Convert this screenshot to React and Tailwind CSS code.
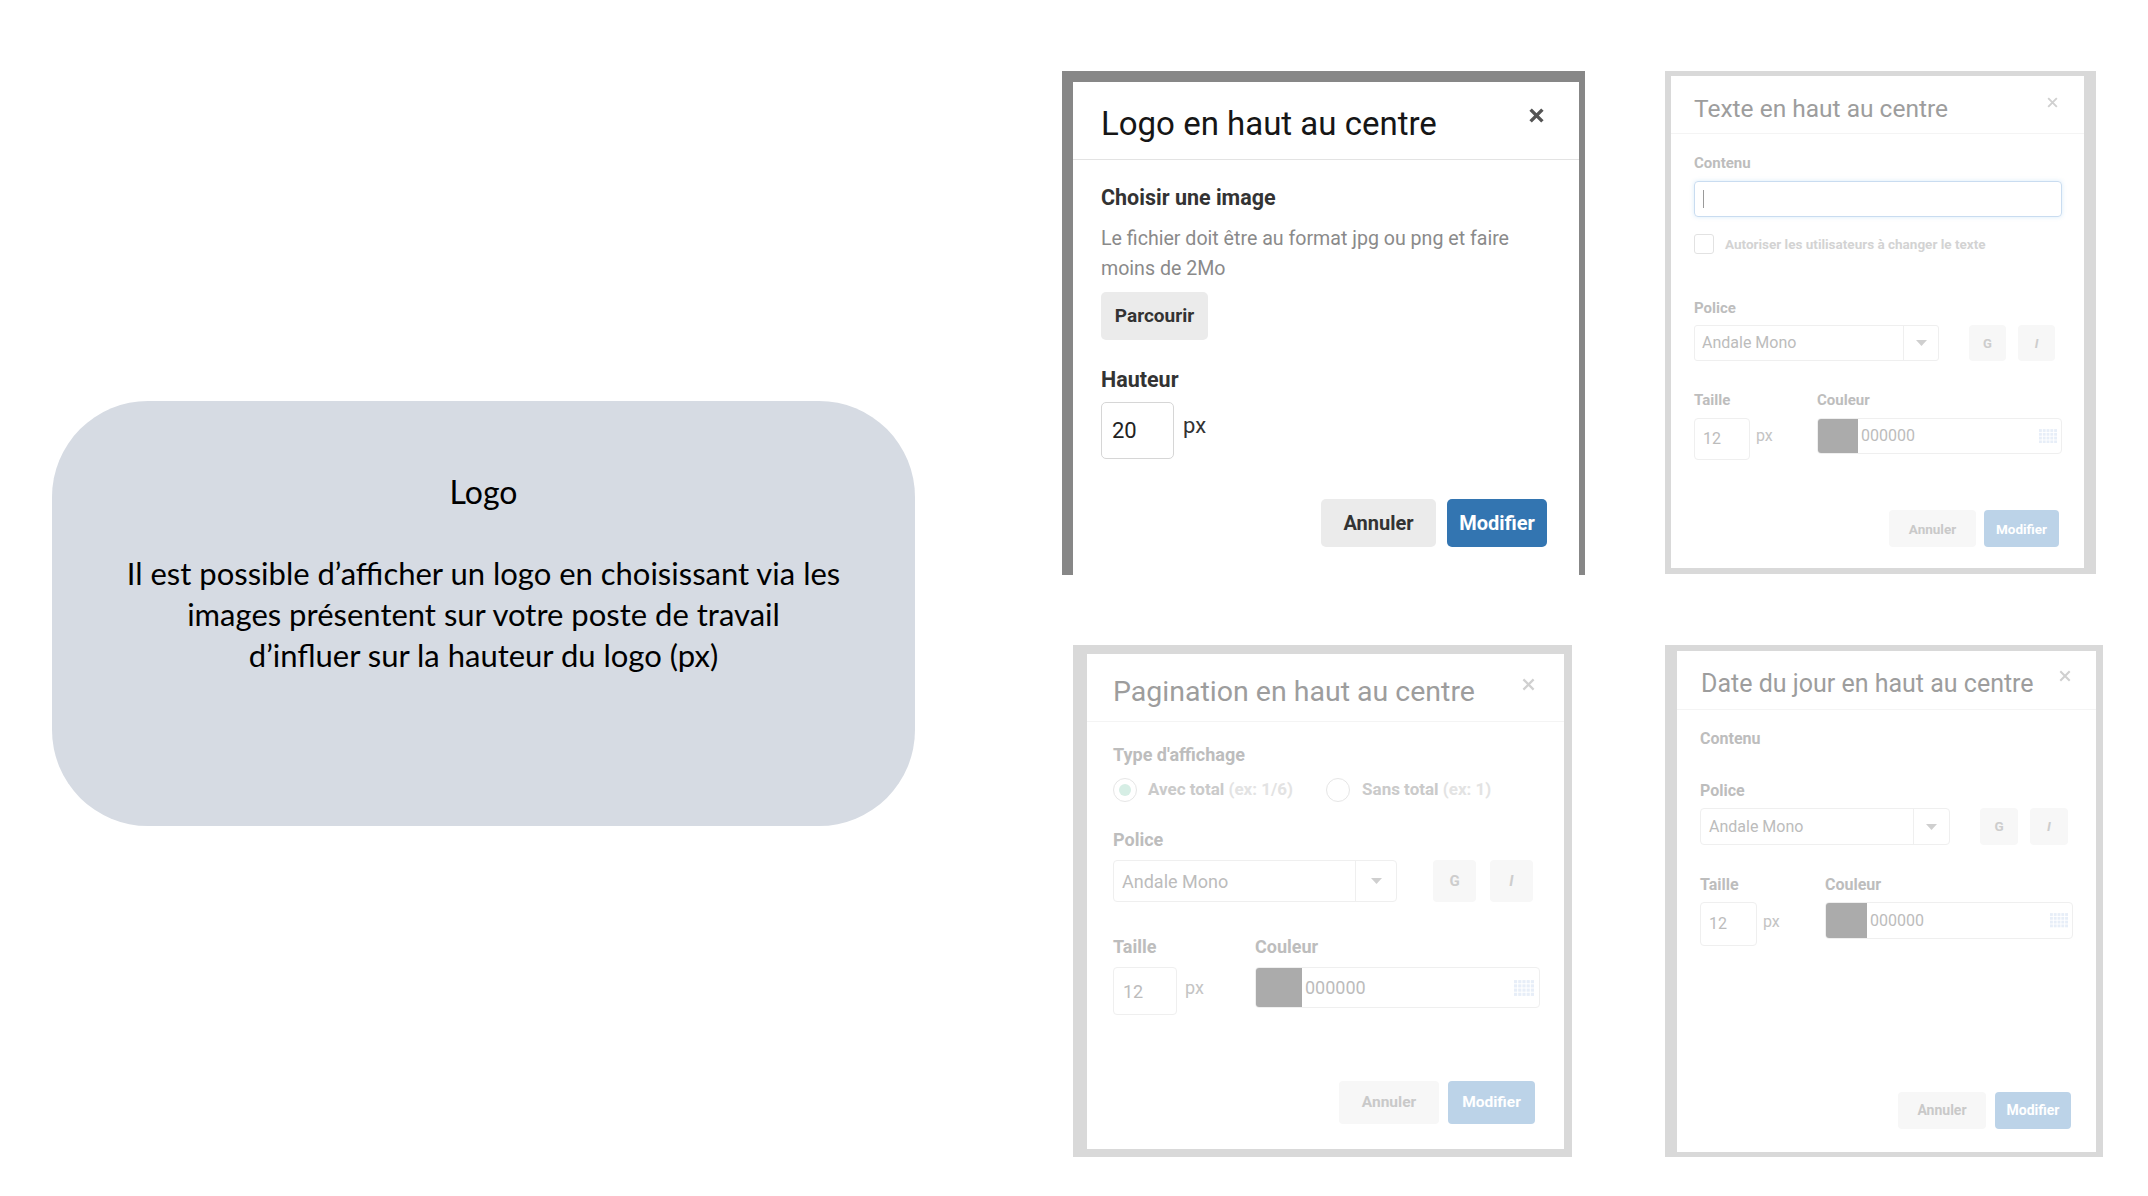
import React from 'react'

// Cross used in the modal headers (square ends, like the bootstrap close glyph)
function CloseX({ size, color, width }) {
  return (
    <svg width={size} height={size} viewBox="0 0 14 14" className="shrink-0">
      <path d="M1.5 1.5 L12.5 12.5 M12.5 1.5 L1.5 12.5" stroke={color} strokeWidth={width} strokeLinecap="butt" />
    </svg>
  )
}

function Caret() {
  return (
    <svg width="11" height="6" viewBox="0 0 11 6">
      <path d="M0 0 H11 L5.5 6 Z" fill="#cfcfcf" />
    </svg>
  )
}

// Little calendar-like grid shown at the end of the colour field
function GridIcon({ size }) {
  const cells = []
  for (let r = 0; r < 4; r++) {
    for (let c = 0; c < 5; c++) {
      cells.push(<rect key={`${r}-${c}`} x={c * 4} y={r * 4} width="3" height="3" fill="#e7eef8" />)
    }
  }
  return (
    <svg width={size} height={size * 0.8} viewBox="0 0 19 15">
      {cells}
    </svg>
  )
}

function LogoModal() {
  return (
    <div className="w-[523px] h-[504px] shrink-0 border-l-[11px] border-t-[11px] border-r-[6px] border-[#878787] bg-white font-['Roboto',sans-serif]">
      <div className="h-[78px] border-b border-[#e3e3e3] flex items-start justify-between pl-[28px] pr-[35px] pt-[22px]">
        <h2 className="text-[33px] leading-[40px] text-[#161616]">Logo en haut au centre</h2>
        <div className="mt-[4px]">
          <CloseX size={15} color="#555" width={3.2} />
        </div>
      </div>
      <div className="pl-[28px] pr-[32px] pt-[25px]">
        <p className="text-[21.5px] leading-[26px] font-bold text-[#333]">Choisir une image</p>
        <p className="mt-[13px] text-[19.6px] leading-[30px] text-[#8a8a8a]">
          Le fichier doit être au format jpg ou png et faire
          <br />
          moins de 2Mo
        </p>
        <button className="mt-[8px] h-[48px] w-[107px] rounded-[5px] bg-[#ebebeb] text-[19px] font-bold text-[#333]">
          Parcourir
        </button>
        <p className="mt-[27px] text-[21.5px] leading-[26px] font-bold text-[#333]">Hauteur</p>
        <div className="mt-[9px] flex items-start">
          <div className="w-[73px] h-[57px] border border-[#d6d6d6] rounded-[5px] flex items-center pl-[10px] text-[22px] text-[#222]">
            20
          </div>
          <span className="ml-[9px] mt-[11px] text-[22px] leading-[26px] text-[#333]">px</span>
        </div>
        <div className="mt-[40px] flex justify-end gap-[11px]">
          <button className="h-[48px] w-[115px] rounded-[5px] bg-[#ebebeb] text-[20px] font-bold text-[#333]">Annuler</button>
          <button className="h-[48px] w-[100px] rounded-[5px] bg-[#3375b1] text-[20px] font-bold text-white">Modifier</button>
        </div>
      </div>
    </div>
  )
}

function TexteModal() {
  return (
    <div className="w-[431px] h-[503px] shrink-0 border-l-[6px] border-t-[5px] border-r-[12px] border-b-[6px] border-[#d9d9d9] bg-white font-['Roboto',sans-serif]">
      <div className="h-[58px] border-b border-[#f4f4f4] flex items-start justify-between pl-[23px] pr-[26px] pt-[18px]">
        <h2 className="text-[24.5px] leading-[30px] text-[#9d9d9d]">Texte en haut au centre</h2>
        <div className="mt-[3px]">
          <CloseX size={11} color="#d0d0d0" width={2.4} />
        </div>
      </div>
      <div className="pl-[23px] pr-[22px] pt-[20px]">
        <p className="text-[15px] leading-[18px] font-bold text-[#bdbdbd]">Contenu</p>
        <div className="mt-[9px] h-[36px] border border-[#c9dcf0] rounded-[4px] shadow-[0_0_4px_rgba(102,175,233,0.25)] flex items-center pl-[8px]">
          <span className="w-px h-[18px] bg-[#9a9a9a]" />
        </div>
        <div className="mt-[17px] flex items-center">
          <span className="w-[20px] h-[20px] border border-[#e2e2e2] rounded-[3px]" />
          <span className="ml-[11px] text-[13.5px] font-bold text-[#d3d3d3]">Autoriser les utilisateurs à changer le texte</span>
        </div>
        <p className="mt-[45px] text-[15px] leading-[18px] font-bold text-[#bdbdbd]">Police</p>
        <div className="mt-[8px] flex">
          <div className="w-[245px] h-[36px] border border-[#efefef] rounded-[3px] flex">
            <span className="flex-1 flex items-center pl-[7px] text-[16px] text-[#bcbcbc]">Andale Mono</span>
            <span className="w-[35px] border-l border-[#efefef] flex items-center justify-center"><Caret /></span>
          </div>
          <span className="ml-[30px] w-[37px] h-[36px] rounded-[4px] bg-[#f7f7f7] flex items-center justify-center text-[13px] font-bold text-[#cdcdcd]">G</span>
          <span className="ml-[12px] w-[37px] h-[36px] rounded-[4px] bg-[#f7f7f7] flex items-center justify-center text-[13px] font-bold italic text-[#cdcdcd]">I</span>
        </div>
        <div className="mt-[30px] flex">
          <div className="w-[123px]">
            <p className="text-[15px] leading-[18px] font-bold text-[#bdbdbd]">Taille</p>
            <div className="mt-[9px] flex items-start">
              <span className="w-[56px] h-[42px] border border-[#efefef] rounded-[4px] flex items-center pl-[8px] text-[16px] text-[#bcbcbc]">12</span>
              <span className="ml-[6px] mt-[8px] text-[16px] leading-[20px] text-[#c4c4c4]">px</span>
            </div>
          </div>
          <div>
            <p className="text-[15px] leading-[18px] font-bold text-[#bdbdbd]">Couleur</p>
            <div className="mt-[9px] w-[245px] h-[36px] border border-[#efefef] rounded-[4px] flex items-center overflow-hidden">
              <span className="w-[40px] h-full bg-[#ababab]" />
              <span className="ml-[3px] flex-1 text-[16px] text-[#bcbcbc]">000000</span>
              <span className="mr-[4px]"><GridIcon size={18} /></span>
            </div>
          </div>
        </div>
        <div className="mt-[50px] flex justify-end gap-[8px] pr-[3px]">
          <button className="h-[37px] w-[87px] rounded-[4px] bg-[#f7f7f7] text-[13.5px] font-bold text-[#c9c9c9]">Annuler</button>
          <button className="h-[37px] w-[75px] rounded-[4px] bg-[#bcd3e8] text-[13.5px] font-bold text-white">Modifier</button>
        </div>
      </div>
    </div>
  )
}

function PaginationModal() {
  return (
    <div className="ml-[11px] mt-[70px] w-[499px] h-[512px] shrink-0 border-l-[14px] border-t-[9px] border-r-[8px] border-b-[8px] border-[#d9d9d9] bg-white font-['Roboto',sans-serif]">
      <div className="h-[68px] border-b border-[#f4f4f4] flex items-start justify-between pl-[26px] pr-[29px] pt-[21px]">
        <h2 className="text-[28.5px] leading-[34px] text-[#9d9d9d]">Pagination en haut au centre</h2>
        <div className="mt-[3px]">
          <CloseX size={13} color="#d0d0d0" width={2.4} />
        </div>
      </div>
      <div className="pl-[26px] pr-[24px] pt-[22px]">
        <p className="text-[18px] leading-[22px] font-bold text-[#bdbdbd]">Type d'affichage</p>
        <div className="mt-[12px] flex items-center h-[24px]">
          <span className="w-[24px] h-[24px] rounded-full border border-[#e6e6e6] flex items-center justify-center">
            <span className="w-[12px] h-[12px] rounded-full bg-[#d6eee5]" />
          </span>
          <span className="ml-[11px] text-[17px] font-bold text-[#cacaca]">
            Avec total <span className="text-[#e3e3e3]">(ex: 1/6)</span>
          </span>
          <span className="ml-[33px] w-[24px] h-[24px] rounded-full border border-[#e6e6e6]" />
          <span className="ml-[12px] text-[17px] font-bold text-[#cacaca]">
            Sans total <span className="text-[#e3e3e3]">(ex: 1)</span>
          </span>
        </div>
        <p className="mt-[27px] text-[18px] leading-[22px] font-bold text-[#bdbdbd]">Police</p>
        <div className="mt-[9px] flex">
          <div className="w-[284px] h-[42px] border border-[#efefef] rounded-[4px] flex">
            <span className="flex-1 flex items-center pl-[8px] text-[18px] text-[#bcbcbc]">Andale Mono</span>
            <span className="w-[41px] border-l border-[#efefef] flex items-center justify-center"><Caret /></span>
          </div>
          <span className="ml-[36px] w-[43px] h-[42px] rounded-[4px] bg-[#f7f7f7] flex items-center justify-center text-[15px] font-bold text-[#cdcdcd]">G</span>
          <span className="ml-[14px] w-[43px] h-[42px] rounded-[4px] bg-[#f7f7f7] flex items-center justify-center text-[15px] font-bold italic text-[#cdcdcd]">I</span>
        </div>
        <div className="mt-[34px] flex">
          <div className="w-[142px]">
            <p className="text-[18px] leading-[22px] font-bold text-[#bdbdbd]">Taille</p>
            <div className="mt-[9px] flex items-start">
              <span className="w-[64px] h-[48px] border border-[#efefef] rounded-[4px] flex items-center pl-[9px] text-[18px] text-[#bcbcbc]">12</span>
              <span className="ml-[8px] mt-[10px] text-[18px] leading-[22px] text-[#c4c4c4]">px</span>
            </div>
          </div>
          <div>
            <p className="text-[18px] leading-[22px] font-bold text-[#bdbdbd]">Couleur</p>
            <div className="mt-[9px] w-[285px] h-[41px] border border-[#efefef] rounded-[4px] flex items-center overflow-hidden">
              <span className="w-[46px] h-full bg-[#ababab]" />
              <span className="ml-[3px] flex-1 text-[18px] text-[#bcbcbc]">000000</span>
              <span className="mr-[5px]"><GridIcon size={20} /></span>
            </div>
          </div>
        </div>
        <div className="mt-[66px] flex justify-end gap-[9px] pr-[5px]">
          <button className="h-[43px] w-[100px] rounded-[4px] bg-[#f7f7f7] text-[15.5px] font-bold text-[#c9c9c9]">Annuler</button>
          <button className="h-[43px] w-[87px] rounded-[4px] bg-[#bcd3e8] text-[15.5px] font-bold text-white">Modifier</button>
        </div>
      </div>
    </div>
  )
}

function DateModal() {
  return (
    <div className="mt-[71px] w-[438px] h-[512px] shrink-0 border-l-[12px] border-t-[6px] border-r-[7px] border-b-[5px] border-[#d9d9d9] bg-white font-['Roboto',sans-serif]">
      <div className="h-[59px] border-b border-[#f4f4f4] flex items-start justify-between pl-[24px] pr-[25px] pt-[17px]">
        <h2 className="text-[25px] leading-[32px] text-[#9d9d9d]">Date du jour en haut au centre</h2>
        <div className="mt-[2px]">
          <CloseX size={12} color="#d0d0d0" width={2.4} />
        </div>
      </div>
      <div className="pl-[23px] pr-[23px] pt-[19px]">
        <p className="text-[16px] leading-[20px] font-bold text-[#bdbdbd]">Contenu</p>
        <p className="mt-[32px] text-[16px] leading-[20px] font-bold text-[#bdbdbd]">Police</p>
        <div className="mt-[7px] flex">
          <div className="w-[250px] h-[37px] border border-[#efefef] rounded-[4px] flex">
            <span className="flex-1 flex items-center pl-[8px] text-[16px] text-[#bcbcbc]">Andale Mono</span>
            <span className="w-[36px] border-l border-[#efefef] flex items-center justify-center"><Caret /></span>
          </div>
          <span className="ml-[30px] w-[38px] h-[37px] rounded-[4px] bg-[#f7f7f7] flex items-center justify-center text-[13.5px] font-bold text-[#cdcdcd]">G</span>
          <span className="ml-[12px] w-[38px] h-[37px] rounded-[4px] bg-[#f7f7f7] flex items-center justify-center text-[13.5px] font-bold italic text-[#cdcdcd]">I</span>
        </div>
        <div className="mt-[30px] flex">
          <div className="w-[125px]">
            <p className="text-[16px] leading-[20px] font-bold text-[#bdbdbd]">Taille</p>
            <div className="mt-[7px] flex items-start">
              <span className="w-[57px] h-[44px] border border-[#efefef] rounded-[4px] flex items-center pl-[8px] text-[16px] text-[#bcbcbc]">12</span>
              <span className="ml-[6px] mt-[10px] text-[16px] leading-[20px] text-[#c4c4c4]">px</span>
            </div>
          </div>
          <div>
            <p className="text-[16px] leading-[20px] font-bold text-[#bdbdbd]">Couleur</p>
            <div className="mt-[7px] w-[248px] h-[37px] border border-[#efefef] rounded-[4px] flex items-center overflow-hidden">
              <span className="w-[41px] h-full bg-[#ababab]" />
              <span className="ml-[3px] flex-1 text-[16px] text-[#bcbcbc]">000000</span>
              <span className="mr-[4px]"><GridIcon size={18} /></span>
            </div>
          </div>
        </div>
        <div className="mt-[146px] flex justify-end gap-[9px] pr-[2px]">
          <button className="h-[37px] w-[88px] rounded-[4px] bg-[#f7f7f7] text-[14px] font-bold text-[#c9c9c9]">Annuler</button>
          <button className="h-[37px] w-[76px] rounded-[4px] bg-[#bcd3e8] text-[14px] font-bold text-white">Modifier</button>
        </div>
      </div>
    </div>
  )
}

export default function App() {
  return (
    <div className="flex w-[2148px] h-[1196px] bg-white overflow-hidden">
      {/* Explanation bubble */}
      <div className="w-[1062px] shrink-0 pl-[52px] pt-[401px]">
        <div className="w-[863px] h-[425px] rounded-[96px] bg-[#d6dbe3] flex flex-col items-center pt-[71px] text-black font-['Lato',sans-serif]">
          <p className="text-[32px] leading-[40px]">Logo</p>
          <p className="mt-[41px] text-[31px] leading-[41px] text-center">
            Il est possible d’afficher un logo en choisissant via les
            <br />
            images présentent sur votre poste de travail
            <br />
            d’influer sur la hauteur du logo (px)
          </p>
        </div>
      </div>

      {/* Screenshots of the settings modals */}
      <div className="w-[603px] shrink-0 flex flex-col pt-[71px]">
        <LogoModal />
        <PaginationModal />
      </div>
      <div className="flex flex-col pt-[71px]">
        <TexteModal />
        <DateModal />
      </div>
    </div>
  )
}
